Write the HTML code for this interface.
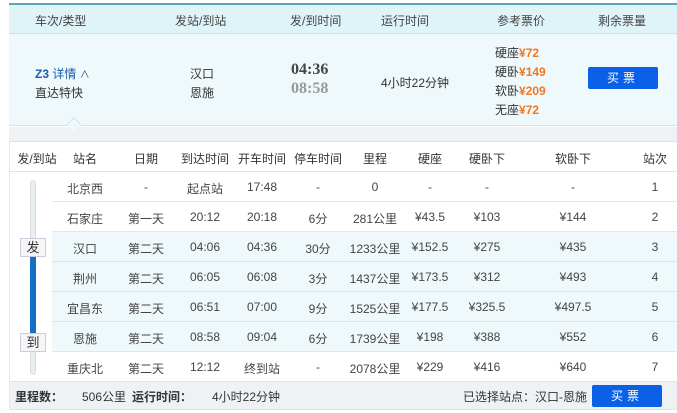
<!DOCTYPE html>
<html><head><meta charset="utf-8"><style>
*{margin:0;padding:0;box-sizing:border-box}
body{width:677px;height:413px;background:#fff;font-family:"Liberation Sans","Noto Sans CJK SC",sans-serif;font-size:12px;color:#333;position:relative;overflow:hidden}
.a{position:absolute;white-space:nowrap}
.c{text-align:center}
</style></head><body>
<div class="a" style="left:9px;top:3px;width:668px;height:31px;background:#dff4f9;border-top:2px solid #5aa6b4;border-bottom:1px solid #c6e2ea"></div>
<div class="a" style="left:35px;top:12px;color:#444">车次/类型</div>
<div class="a" style="left:175px;top:12px;color:#444">发站/到站</div>
<div class="a" style="left:290px;top:12px;color:#444">发/到时间</div>
<div class="a" style="left:381px;top:12px;color:#444">运行时间</div>
<div class="a" style="left:497px;top:12px;color:#444">参考票价</div>
<div class="a" style="left:598px;top:12px;color:#444">剩余票量</div>
<div class="a" style="left:9px;top:34px;width:668px;height:92px;background:#eff9fb;border-bottom:1px solid #d9e3e6"></div>
<div class="a" style="left:35px;top:65px;color:#1a5fa8"><b>Z3</b> 详情 <span style="font-size:10px">&#8743;</span></div>
<div class="a" style="left:35px;top:84px">直达特快</div>
<div class="a" style="left:190px;top:65px">汉口</div>
<div class="a" style="left:190px;top:84px">恩施</div>
<div class="a" style="left:291px;top:61px;font-size:16px;font-weight:bold;color:#444;font-family:'Liberation Serif',serif">04:36</div>
<div class="a" style="left:291px;top:80px;font-size:16px;font-weight:bold;color:#999;font-family:'Liberation Serif',serif">08:58</div>
<div class="a" style="left:381px;top:74px">4小时22分钟</div>
<div class="a" style="left:495px;top:44px;line-height:19px;font-size:12px">硬座<b style="color:#f07820">¥72</b><br>硬卧<b style="color:#f07820">¥149</b><br>软卧<b style="color:#f07820">¥209</b><br>无座<b style="color:#f07820">¥72</b></div>
<div class="a c" style="left:588px;top:67px;width:70px;height:22px;line-height:22px;background:#0a60e6;color:#fff;border-radius:2px;letter-spacing:4px">买票</div>
<div class="a" style="left:9px;top:127px;width:668px;height:15px;background:#eef2f4;border-bottom:1px solid #dde3e6"></div>
<div class="a" style="left:69px;top:119px;width:10px;height:10px;background:#eff9fb;border-left:1px solid #d9e3e6;border-top:1px solid #d9e3e6;transform:rotate(45deg)"></div>
<div class="a" style="left:9px;top:142px;width:668px;height:240px;border-left:1px solid #e3e8ea"></div>
<div class="a" style="left:9px;top:171px;width:668px;height:1px;background:#dde3e6"></div>
<div class="a c" style="left:9px;top:150px;width:56px">发/到站</div>
<div class="a c" style="left:65px;top:150px;width:40px">站名</div>
<div class="a c" style="left:126px;top:150px;width:40px">日期</div>
<div class="a c" style="left:175px;top:150px;width:60px">到达时间</div>
<div class="a c" style="left:234px;top:150px;width:56px">开车时间</div>
<div class="a c" style="left:290px;top:150px;width:56px">停车时间</div>
<div class="a c" style="left:355px;top:150px;width:40px">里程</div>
<div class="a c" style="left:410px;top:150px;width:40px">硬座</div>
<div class="a c" style="left:462px;top:150px;width:50px">硬卧下</div>
<div class="a c" style="left:548px;top:150px;width:50px">软卧下</div>
<div class="a c" style="left:635px;top:150px;width:40px">站次</div>
<div class="a" style="left:52px;top:232px;width:625px;height:120px;background:#eff9fb"></div>
<div class="a" style="left:52px;top:201px;width:625px;height:1px;background:#e2e8ea"></div>
<div class="a" style="left:52px;top:231px;width:625px;height:1px;background:#e2e8ea"></div>
<div class="a" style="left:52px;top:261px;width:625px;height:1px;background:#dbe5e8"></div>
<div class="a" style="left:52px;top:291px;width:625px;height:1px;background:#dbe5e8"></div>
<div class="a" style="left:52px;top:321px;width:625px;height:1px;background:#dbe5e8"></div>
<div class="a" style="left:52px;top:351px;width:625px;height:1px;background:#e2e8ea"></div>
<div class="a" style="left:9px;top:381px;width:668px;height:1px;background:#dde3e6"></div>
<div class="a" style="left:30px;top:180px;width:6px;height:195px;background:#e9eef1;border:1px solid #d6dde1;border-radius:3px"></div>
<div class="a" style="left:30px;top:255px;width:6px;height:85px;background:#1170c6"></div>
<div class="a c" style="left:20px;top:238px;width:26px;height:19px;line-height:17px;background:#f3f5f6;border:1px solid #ccd;font-size:13px">发</div>
<div class="a c" style="left:20px;top:333px;width:26px;height:19px;line-height:17px;background:#f3f5f6;border:1px solid #ccd;font-size:13px">到</div>
<div id="rows"></div>
<script>
var R=[["北京西","-","起点站","17:48","-","0","-","-","-","1"],
["石家庄","第一天","20:12","20:18","6分","281公里","¥43.5","¥103","¥144","2"],
["汉口","第二天","04:06","04:36","30分","1233公里","¥152.5","¥275","¥435","3"],
["荆州","第二天","06:05","06:08","3分","1437公里","¥173.5","¥312","¥493","4"],
["宜昌东","第二天","06:51","07:00","9分","1525公里","¥177.5","¥325.5","¥497.5","5"],
["恩施","第二天","08:58","09:04","6分","1739公里","¥198","¥388","¥552","6"],
["重庆北","第二天","12:12","终到站","-","2078公里","¥229","¥416","¥640","7"]];
var X=[[65,40],[126,40],[175,60],[234,56],[290,56],[345,60],[405,50],[462,50],[548,50],[635,40]];
var h="";
R.forEach(function(r,i){r.forEach(function(t,j){h+='<div class="a c" style="left:'+X[j][0]+'px;top:'+(180+i*30)+'px;width:'+X[j][1]+'px;color:#444">'+t+'</div>';});});
document.getElementById("rows").innerHTML=h;
</script>
<div class="a" style="left:9px;top:382px;width:668px;height:28px;background:#eef2f4;border-bottom:1px solid #dde3e6;border-left:1px solid #e3e8ea"></div>
<div class="a" style="left:15px;top:388px"><b>里程数：</b></div>
<div class="a" style="left:82px;top:388px">506公里</div>
<div class="a" style="left:132px;top:388px"><b>运行时间：</b></div>
<div class="a" style="left:212px;top:388px">4小时22分钟</div>
<div class="a" style="left:463px;top:388px">已选择站点：汉口-恩施</div>
<div class="a c" style="left:592px;top:385px;width:70px;height:22px;line-height:22px;background:#0a60e6;color:#fff;border-radius:2px;letter-spacing:4px">买票</div>
</body></html>
